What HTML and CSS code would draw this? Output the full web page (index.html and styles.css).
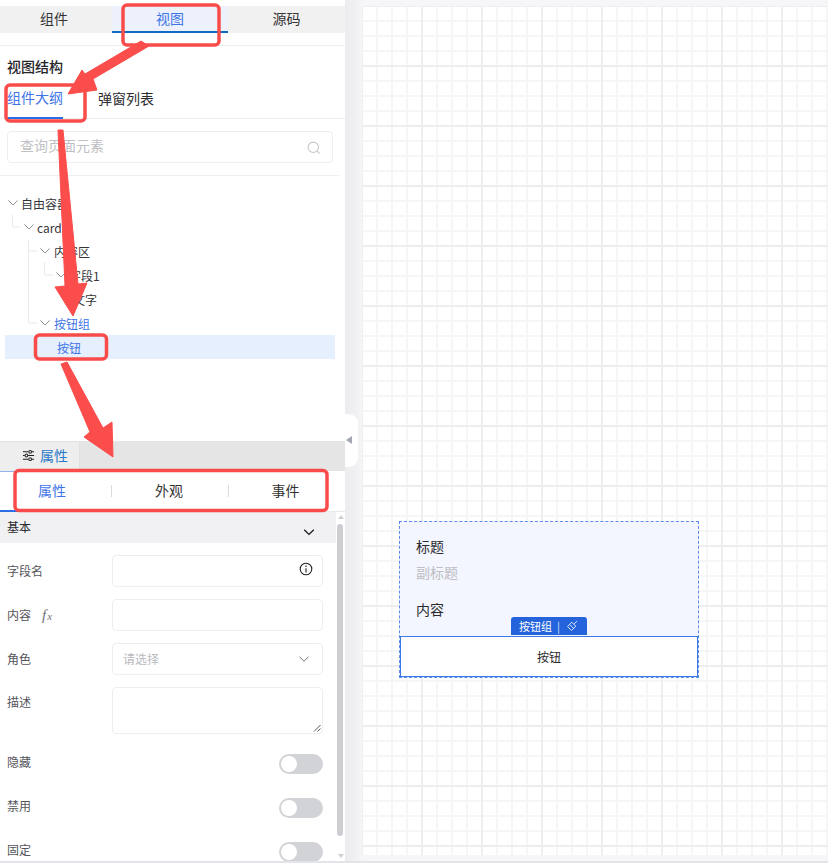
FILE: index.html
```html
<!DOCTYPE html>
<html lang="zh-CN">
<head>
<meta charset="utf-8">
<title>视图结构</title>
<link rel="stylesheet" href="styles.css">
</head>
<body>
<div class="app">
  <aside class="sidebar">
    <section class="view-pane">
      <nav class="top-tabs">
        <div class="top-tab">组件</div>
        <div class="top-tab is-active">视图</div>
        <div class="top-tab">源码</div>
      </nav>
      <div class="view-head">
        <h2 class="view-title">视图结构</h2>
        <div class="outline-tabs">
          <div class="outline-tab is-active">组件大纲</div>
          <div class="outline-tab">弹窗列表</div>
        </div>
      </div>
      <div class="search-wrap">
        <div class="search">
          <span class="search-text">查询页面元素</span>
          <svg class="search-icon" viewBox="0 0 14 14"><circle cx="6.3" cy="6.3" r="5.2"/><path d="M10.2 10.2 12.6 12.6"/></svg>
        </div>
      </div>
      <div class="tree">
        <svg class="tree-guides" viewBox="0 0 345 168"><path d="M12.5 23V35H20M28.5 48V131M28.5 59H37M28.5 131H37M44.5 70V83H53M37.5 144V155H52"/></svg>
        <div class="tree-row lv0"><svg class="chev" viewBox="0 0 12 12"><path d="M1.5 3.5 6 8l4.5-4.5"/></svg><span class="node-text">自由容器</span></div>
        <div class="tree-row lv1"><svg class="chev" viewBox="0 0 12 12"><path d="M1.5 3.5 6 8l4.5-4.5"/></svg><span class="node-text">card</span></div>
        <div class="tree-row lv2"><svg class="chev" viewBox="0 0 12 12"><path d="M1.5 3.5 6 8l4.5-4.5"/></svg><span class="node-text">内容区</span></div>
        <div class="tree-row lv3"><svg class="chev" viewBox="0 0 12 12"><path d="M1.5 3.5 6 8l4.5-4.5"/></svg><span class="node-text">字段1</span></div>
        <div class="tree-row leaf4"><span class="node-text">文字</span></div>
        <div class="tree-row lv2 is-blue"><svg class="chev" viewBox="0 0 12 12"><path d="M1.5 3.5 6 8l4.5-4.5"/></svg><span class="node-text">按钮组</span></div>
        <div class="tree-row leaf3 is-blue is-selected"><span class="node-text">按钮</span></div>
      </div>
    </section>
    <section class="props-pane">
      <div class="props-bar">
        <div class="props-tab">
          <svg class="sliders" viewBox="0 0 14 14"><path d="M1 3h6M10.5 3H13M1 7h2M6.5 7H13M1 11h6M10.5 11H13"/><circle cx="8.8" cy="3" r="1.5"/><circle cx="4.8" cy="7" r="1.5"/><circle cx="8.8" cy="11" r="1.5"/></svg>
          <span class="props-tab-text">属性</span>
        </div>
      </div>
      <div class="sub-tabs">
        <div class="sub-tab is-active">属性</div>
        <div class="sub-tab">外观</div>
        <div class="sub-tab">事件</div>
      </div>
      <div class="props-body">
        <div class="props-form">
          <div class="group-head">
            <span>基本</span>
            <svg class="group-chev" viewBox="0 0 12 12"><path d="M1.2 3.8 6 8.4l4.800-4.600"/></svg>
          </div>
          <div class="form-row row-first">
            <label class="form-label">字段名</label>
            <div class="field">
              <svg class="info" viewBox="0 0 14 14"><circle cx="7" cy="7" r="5.800"/><path d="M7 6.200V10.500M7 3.600V4.900"/></svg>
            </div>
          </div>
          <div class="form-row">
            <label class="form-label">内容<i class="fx">f<span class="fx-sub">x</span></i></label>
            <div class="field"></div>
          </div>
          <div class="form-row">
            <label class="form-label">角色</label>
            <div class="field field-select">
              <span class="select-text">请选择</span>
              <svg class="select-chev" viewBox="0 0 12 12"><path d="M1.500 3.800 6 8.200l4.500-4.400"/></svg>
            </div>
          </div>
          <div class="form-row row-top">
            <label class="form-label">描述</label>
            <div class="field field-area">
              <svg class="resize" viewBox="0 0 8 8"><path d="M7.500 1 1 7.500M7.500 4.500 4.500 7.500"/></svg>
            </div>
          </div>
          <div class="form-row row-switch row-switch-first"><label class="form-label">隐藏</label><span class="switch"></span></div>
          <div class="form-row row-switch"><label class="form-label">禁用</label><span class="switch"></span></div>
          <div class="form-row row-switch"><label class="form-label">固定</label><span class="switch"></span></div>
        </div>
        <div class="scroll-track">
          <span class="scroll-up"></span>
          <span class="scroll-thumb"></span>
          <span class="scroll-down"></span>
        </div>
      </div>
    </section>
  </aside>
  <div class="collapse-handle"><span class="collapse-arrow"></span></div>
  <main class="stage">
    <div class="canvas">
      <div class="card">
        <div class="card-content">
          <div class="card-title">标题</div>
          <div class="card-sub">副标题</div>
          <div class="card-text">内容</div>
        </div>
        <div class="card-actions">
          <div class="tag">按钮组<span class="tag-sep">|</span>
            <svg class="tag-icon" viewBox="0 0 12 12"><path d="M1.500 6.500 5.800 2.200l4 4-4.300 4.300z"/><path d="M3.600 4.400l4 4M8.200 3.800l3-2.800"/></svg>
          </div>
          <div class="action-label">按钮</div>
        </div>
      </div>
    </div>
  </main>
</div>
<svg class="annotations" viewBox="0 0 828 863">
  <g class="anno-box">
    <rect x="123" y="5" width="96" height="40" rx="4"/>
    <rect x="6" y="85" width="79" height="36" rx="4"/>
    <rect x="35.500" y="335" width="71" height="24" rx="4"/>
    <rect x="15" y="470.500" width="312" height="40" rx="4"/>
  </g>
  <g class="anno-arrow">
    <polygon points="141,41 149,46 93,79 97,90 68,94 82,70 85,74"/>
    <polygon points="58,130 63,130 78,284 87,283 73,316 55,287 65,286"/>
    <polygon points="61,364 67,362 103,428 112,422 113,457 84,437 90,432"/>
  </g>
</svg>
</body>
</html>
```

FILE: styles.css
```css
* { box-sizing: border-box; }
html, body { margin: 0; padding: 0; height: 863px; overflow: hidden; background: #fff; }
body {
  position: relative;
  font-family: "Noto Sans CJK SC", "Noto Sans", sans-serif;
  color: #2b2b2f;
  font-size: 14px;
}
.app { display: flex; height: 861px; position: relative; }
.sidebar { width: 345px; flex: none; display: flex; flex-direction: column; background: #fff; }

/* upper pane */
.view-pane { height: 441px; flex: none; display: flex; flex-direction: column; }
.top-tabs { display: grid; grid-template-columns: 112px 116px 117px; margin-top: 6px; height: 27px; background: #f1f1f1; }
.top-tab { text-align: center; line-height: 24px; font-size: 14px; color: #333; }
.top-tab:first-child { padding-right: 4px; }
.top-tab.is-active { background: #edf1fb; color: #3f75e8; border-bottom: 2px solid #0f6cc4; }
.view-head { margin-top: 12px; border-top: 1px solid #eeeeee; border-bottom: 1px solid #eeeeee; padding: 10px 0 0 7px; height: 74px; }
.view-title { margin: 0; font-size: 14px; line-height: 20px; font-weight: 500; color: #26262a; }
.outline-tabs { display: flex; gap: 35px; margin-top: 7px; }
.outline-tab { font-size: 14px; line-height: 20px; height: 35px; padding-top: 5px; color: #2b2b2f; }
.outline-tab.is-active { color: #3f75e8; border-bottom: 2px solid #2b6de5; padding-top: 4px; height: 36px; }
.search-wrap { padding: 12px 6px 12px 7px; border-bottom: 1px solid #efefef; margin-right: 6px; }
.search { height: 32px; border: 1px solid #eeeeee; border-radius: 4px; display: flex; align-items: center; justify-content: space-between; padding: 0 11px 0 12px; }
.search-text { color: #bfbfc4; font-size: 14px; margin-top: -4px; }
.search-icon { width: 14px; height: 14px; fill: none; stroke: #c6c6ca; stroke-width: 1.100; margin-top: 2px; }
.tree { position: relative; margin-top: 15px; padding: 0 10px 0 5px; }
.tree-guides { position: absolute; left: 0; top: 1px; width: 345px; height: 168px; fill: none; stroke: #e9e9ec; stroke-width: 1; }
.tree-row { position: relative; height: 24px; display: flex; align-items: center; gap: 2px; font-size: 12px; color: #35353a; }
.tree-row.is-blue { color: #3f75e8; }
.tree-row.is-selected { background: #e6effd; }
.chev { width: 12px; height: 12px; flex: none; fill: none; stroke: #8f8f96; stroke-width: 1; }
.lv0 { padding-left: 2px; }
.lv1 { padding-left: 18px; }
.lv2 { padding-left: 34px; gap: 3px; }
.lv3 { padding-left: 50px; }
.leaf3 { padding-left: 52px; }
.leaf4 { padding-left: 68px; }

/* lower pane */
.props-pane { flex: 1; min-height: 0; display: flex; flex-direction: column; }
.props-bar { height: 30px; flex: none; background: #e5e5e5; }
.props-tab { width: 80px; height: 31px; background: #eeeeee; border-bottom: 1px solid #8fb2ea; border-right: 1px solid #e0e0e0; border-top: 1px solid #e2e2e2; display: flex; align-items: center; padding: 0 0 3px 22px; gap: 5px; font-size: 14px; color: #2a78c8; }
.sliders { width: 13px; height: 13px; fill: #eee; stroke: #222; stroke-width: 1.100; flex: none; }
.sub-tabs { height: 41px; flex: none; display: grid; grid-template-columns: 111px 117px 117px; align-items: center; border-bottom: 1px solid #e8e8ec; }
.sub-tab { position: relative; height: 41px; line-height: 38px; text-align: center; font-size: 14px; color: #333; }
.sub-tab + .sub-tab::before { content: ""; position: absolute; left: 0; top: 14px; height: 12px; width: 1px; background: #dcdcdc; }
.sub-tab:nth-child(2) { padding-right: 1px; }
.sub-tab:nth-child(3) { padding-right: 2px; }
.sub-tab.is-active { color: #3f75e8; border-bottom: 2px solid #2b6de5; padding-right: 7px; }
.props-body { flex: 1; min-height: 0; display: flex; overflow: hidden; }
.props-form { width: 336px; flex: none; }
.group-head { height: 31px; background: #f1f1f4; display: flex; align-items: center; justify-content: space-between; padding: 0 21px 2px 7px; font-size: 12px; color: #2b2b2f; }
.group-chev { width: 12px; height: 12px; margin-top: 10px; fill: none; stroke: #1d1d20; stroke-width: 1.400; }
.form-row { display: flex; align-items: center; justify-content: space-between; padding: 0 13px 0 7px; margin-top: 12px; }
.row-first { margin-top: 12px; }
.row-top { align-items: flex-start; }
.row-top .form-label { margin-top: 6px; }
.form-label { font-size: 12px; line-height: 18px; color: #55555b; }
.fx { font-family: "Liberation Serif", serif; font-size: 15px; color: #6f6f75; margin-left: 11px; }
.fx-sub { font-size: 11px; margin-left: 1px; }
.field { width: 211px; height: 32px; border: 1px solid #eeeeee; border-radius: 4px; display: flex; align-items: center; justify-content: flex-end; padding: 0 9px; position: relative; }
.field-select { justify-content: space-between; padding: 0 12px 0 10px; }
.select-text { font-size: 12px; color: #b9b9be; margin-top: -2px; }
.select-chev { width: 12px; height: 12px; fill: none; stroke: #76767c; stroke-width: 1; }
.info { width: 14px; height: 14px; margin-bottom: 4px; fill: none; stroke: #222; stroke-width: 1.100; }
.field-area { height: 47px; align-items: flex-end; padding: 0 1px 1px 0; }
.resize { width: 8px; height: 8px; fill: none; stroke: #55555b; stroke-width: 1; }
.row-switch { height: 20px; margin-top: 24px; }
.row-switch-first { margin-top: 20px; }
.row-switch .form-label { margin-top: -5px; }
.switch { width: 44px; height: 20px; border-radius: 10px; background: #d2d3d7; position: relative; display: block; }
.switch::before { content: ""; position: absolute; left: 2px; top: 2px; width: 16px; height: 16px; border-radius: 50%; background: #fff; }
.scroll-track { flex: 1; position: relative; display: flex; flex-direction: column; align-items: center; background: #fff; }
.scroll-up { margin-top: 3px; width: 0; height: 0; border-left: 3px solid transparent; border-right: 3px solid transparent; border-bottom: 4px solid #d0d0d4; }
.scroll-thumb { margin-top: 5px; width: 6px; height: 312px; background: #cdcdd2; border-radius: 3px; margin-left: -2px; }
.scroll-down { margin-top: 18px; width: 0; height: 0; border-left: 3px solid transparent; border-right: 3px solid transparent; border-top: 4px solid #d0d0d4; }

/* handle */
.collapse-handle { position: absolute; left: 345px; top: 414px; width: 13px; height: 53px; background: #fff; border-radius: 0 9px 9px 0; display: flex; align-items: center; }
.collapse-arrow { margin-left: 1px; width: 0; height: 0; border-top: 4px solid transparent; border-bottom: 4px solid transparent; border-right: 6px solid #a2a6b0; margin-top: -1px; }

/* stage */
.stage { flex: 1; min-width: 0; background: linear-gradient(90deg, #ececef 0, #f1f1f4 12px, #f6f6f8 17px); padding: 6px 0 6px 17px; }
.canvas {
  position: relative;
  height: 849px;
  background-color: #fff;
  background-image:
    linear-gradient(90deg, #eeeeee 2px, transparent 2px),
    linear-gradient(#eeeeee 2px, transparent 2px),
    linear-gradient(90deg, #f6f6f6 2px, transparent 2px),
    linear-gradient(#f6f6f6 2px, transparent 2px);
  background-size: 60px 60px, 60px 60px, 15px 15px, 15px 15px;
  background-position: -1px -1px;
}
.card { position: absolute; left: 37px; top: 515px; width: 300px; height: 157px; border: 1px dashed #5b8bea; background: #f3f6fe; }
.card-content { height: 114px; padding: 13px 0 0 16px; font-size: 14px; color: #2b2b2f; }
.card-title { line-height: 22px; }
.card-sub { line-height: 22px; margin-top: 4px; color: #bdbdc4; }
.card-text { line-height: 22px; margin-top: 15px; }
.card-actions { position: relative; height: 41px; background: #fff; border: 1px solid #3b78e7; display: flex; align-items: center; justify-content: center; }
.action-label { font-size: 12px; color: #2b2b2f; }
.tag { position: absolute; left: 110px; top: -20px; width: 76px; height: 18px; background: #2463db; border-radius: 3px 3px 0 0; color: #fff; font-size: 11px; line-height: 18px; display: flex; align-items: center; padding-left: 8px; }
.tag-sep { margin: 0 6px 0 5px; color: #d5e2fb; }
.tag-icon { width: 12px; height: 12px; fill: none; stroke: #dbe6fd; stroke-width: 1; }

/* annotations */
.annotations { position: absolute; left: 0; top: 0; width: 828px; height: 863px; pointer-events: none; }
.anno-box rect { fill: none; stroke: #f94c4a; stroke-width: 3.500; }
.anno-arrow polygon { fill: #fb4d4b; stroke: #fb4d4b; stroke-width: 1; stroke-linejoin: round; }
body::after { content: ""; display: block; height: 2px; background: #e3e3ea; }
```
